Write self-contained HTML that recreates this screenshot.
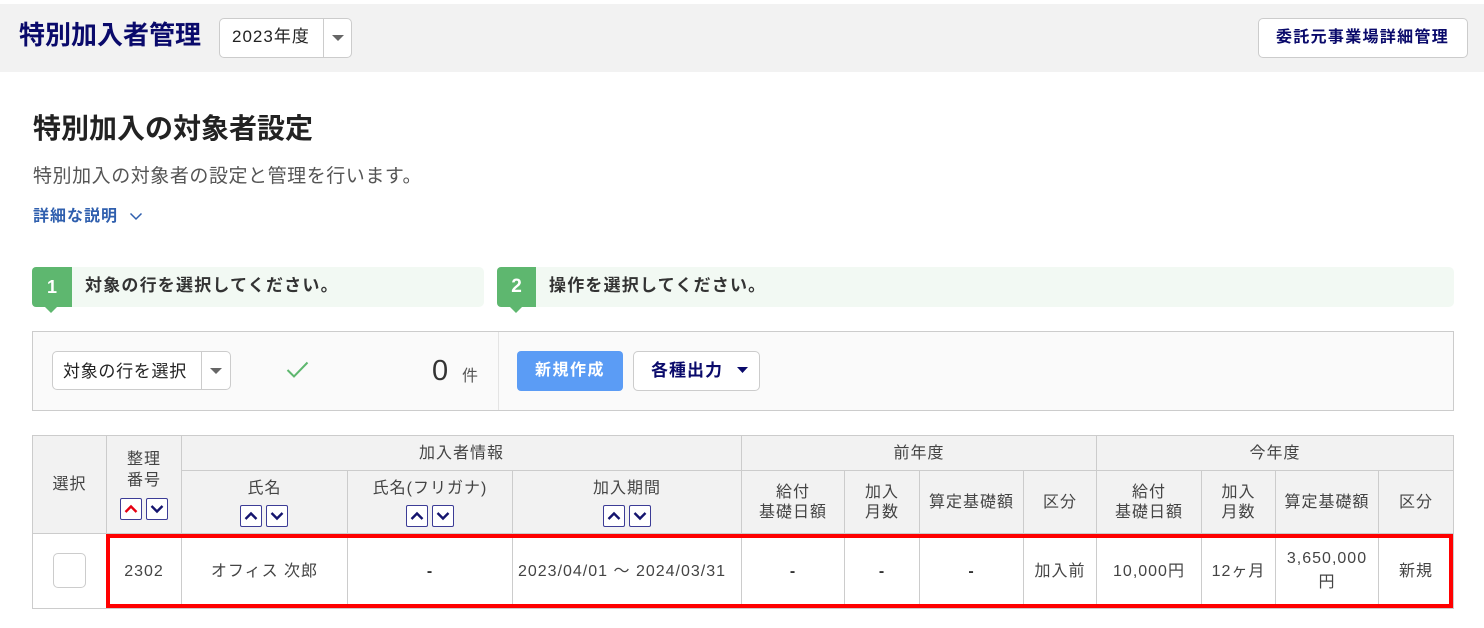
<!DOCTYPE html>
<html lang="ja"><head><meta charset="utf-8"><style>
html,body{margin:0;padding:0;background:#fff}
body{width:1484px;height:628px;position:relative;overflow:hidden;font-family:"Liberation Sans","Noto Sans CJK JP",sans-serif;color:#333}
div,span,svg{position:absolute;box-sizing:border-box}
.t{white-space:nowrap;line-height:1}
.c{text-align:center;font-size:16px;letter-spacing:1px;color:#444;white-space:nowrap;line-height:1}
.d{font-weight:700;color:#333}
.l{background:#ccc}
.box{background:#fff;border:1px solid #ccc;border-radius:5px}
.sb{width:22px;height:22px;background:#fff;border:1px solid #3c3c96;border-radius:2px}
.sb svg{left:3px;top:4px}
</style></head><body>
<div style="left:0;top:4px;width:1484px;height:68px;background:#f2f2f2"></div>
<div class="t" style="left:19px;top:22px;font-size:26px;font-weight:700;color:#0a0a6b">特別加入者管理</div>
<div class="box" style="left:219px;top:18px;width:133px;height:40px"></div>
<div class="l" style="left:323px;top:18px;width:1px;height:40px"></div>
<div class="t" style="left:232px;top:28px;font-size:17px;letter-spacing:1px;color:#222">2023年度</div>
<svg style="left:332px;top:35px" width="12" height="7"><path d="M0 0H12L6 6Z" fill="#666"/></svg>
<div class="box" style="left:1258px;top:18px;width:210px;height:40px"></div>
<div class="t" style="left:1276px;top:30px;font-size:16px;font-weight:700;letter-spacing:1.3px;color:#0a0a6b">委託元事業場詳細管理</div>

<div class="t" style="left:33px;top:115px;font-size:28px;font-weight:700;color:#222">特別加入の対象者設定</div>
<div class="t" style="left:33px;top:167px;font-size:19px;letter-spacing:.55px;color:#555">特別加入の対象者の設定と管理を行います。</div>
<div class="t" style="left:33px;top:209px;font-size:16px;font-weight:700;letter-spacing:1px;color:#2f5fae">詳細な説明</div>
<svg style="left:129px;top:212px" width="14" height="9"><path d="M1.5 1.5L7 7L12.5 1.5" fill="none" stroke="#2f5fae" stroke-width="1.5"/></svg>

<div style="left:32px;top:267px;width:452px;height:40px;background:#f2f9f3;border-radius:5px"></div>
<div style="left:32px;top:267px;width:40px;height:40px;background:#5eb76f;border-radius:4px 0 0 4px"></div>
<svg style="left:45px;top:307px" width="12" height="6"><path d="M0 0H12L6 6Z" fill="#5eb76f"/></svg>
<div class="t" style="left:32px;top:278px;width:40px;text-align:center;font-size:18px;font-weight:700;color:#fff">1</div>
<div class="t" style="left:85px;top:277px;font-size:17px;font-weight:700;letter-spacing:1.2px;color:#333">対象の行を選択してください。</div>
<div style="left:497px;top:267px;width:957px;height:40px;background:#f2f9f3;border-radius:5px"></div>
<div style="left:497px;top:267px;width:39px;height:40px;background:#5eb76f;border-radius:4px 0 0 4px"></div>
<svg style="left:510px;top:307px" width="12" height="6"><path d="M0 0H12L6 6Z" fill="#5eb76f"/></svg>
<div class="t" style="left:497px;top:277px;width:39px;text-align:center;font-size:19px;font-weight:700;color:#fff">2</div>
<div class="t" style="left:549px;top:277px;font-size:17px;font-weight:700;letter-spacing:1.2px;color:#333">操作を選択してください。</div>

<div style="left:32px;top:331px;width:1422px;height:80px;background:#fafafa;border:1px solid #ccc"></div>
<div style="left:498px;top:332px;width:1px;height:78px;background:#e4e4e4"></div>
<div class="box" style="left:52px;top:351px;width:179px;height:39px"></div>
<div class="l" style="left:201px;top:351px;width:1px;height:39px"></div>
<div class="t" style="left:63px;top:363px;font-size:17px;letter-spacing:.7px;color:#222">対象の行を選択</div>
<svg style="left:210px;top:368px" width="12" height="7"><path d="M0 0H12L6 6Z" fill="#666"/></svg>
<svg style="left:286px;top:361px" width="23" height="17"><path d="M1.5 9L8 15.5L21.5 1.5" fill="none" stroke="#5eb76f" stroke-width="2"/></svg>
<div class="t" style="left:432px;top:357px;font-size:29px;color:#333">0</div>
<div class="t" style="left:462px;top:369px;font-size:16px;color:#555">件</div>
<div style="left:517px;top:351px;width:106px;height:40px;background:#5b9cf5;border-radius:4px"></div>
<div class="t" style="left:517px;top:363px;width:106px;text-align:center;font-size:16px;font-weight:700;letter-spacing:1.5px;color:#fff">新規作成</div>
<div class="box" style="left:633px;top:351px;width:127px;height:40px"></div>
<div class="t" style="left:651px;top:362px;font-size:17px;font-weight:700;letter-spacing:1px;color:#0a0a6b">各種出力</div>
<svg style="left:737px;top:367px" width="11" height="6"><path d="M0 0H11L5.5 6Z" fill="#0a0a6b"/></svg>

<div style="left:32px;top:435px;width:1422px;height:99px;background:#f2f2f2"></div>
<div style="left:32px;top:435px;width:1422px;height:174px;border:1px solid #ccc"></div>
<div class="l" style="left:33px;top:533px;width:1420px;height:1px"></div>
<div class="l" style="left:182px;top:470px;width:1271px;height:1px"></div>
<div class="l" style="left:106px;top:436px;width:1px;height:172px"></div>
<div class="l" style="left:181px;top:436px;width:1px;height:172px"></div>
<div class="l" style="left:347px;top:470px;width:1px;height:138px"></div>
<div class="l" style="left:512px;top:470px;width:1px;height:138px"></div>
<div class="l" style="left:741px;top:436px;width:1px;height:172px"></div>
<div class="l" style="left:844px;top:470px;width:1px;height:138px"></div>
<div class="l" style="left:919px;top:470px;width:1px;height:138px"></div>
<div class="l" style="left:1023px;top:470px;width:1px;height:138px"></div>
<div class="l" style="left:1096px;top:436px;width:1px;height:172px"></div>
<div class="l" style="left:1201px;top:470px;width:1px;height:138px"></div>
<div class="l" style="left:1275px;top:470px;width:1px;height:138px"></div>
<div class="l" style="left:1378px;top:470px;width:1px;height:138px"></div>

<div class="c" style="left:33px;top:477px;width:73px">選択</div>
<div class="c" style="left:107px;top:452px;width:74px">整理</div>
<div class="c" style="left:107px;top:473px;width:74px">番号</div>
<div class="c" style="left:182px;top:446px;width:559px">加入者情報</div>
<div class="c" style="left:742px;top:446px;width:354px">前年度</div>
<div class="c" style="left:1097px;top:446px;width:356px">今年度</div>
<div class="c" style="left:182px;top:481px;width:165px">氏名</div>
<div class="c" style="left:348px;top:481px;width:164px">氏名(フリガナ)</div>
<div class="c" style="left:513px;top:481px;width:228px">加入期間</div>
<div class="c" style="left:742px;top:485px;width:102px">給付</div>
<div class="c" style="left:742px;top:505px;width:102px">基礎日額</div>
<div class="c" style="left:845px;top:485px;width:74px">加入</div>
<div class="c" style="left:845px;top:505px;width:74px">月数</div>
<div class="c" style="left:920px;top:495px;width:103px">算定基礎額</div>
<div class="c" style="left:1024px;top:495px;width:72px">区分</div>
<div class="c" style="left:1097px;top:485px;width:104px">給付</div>
<div class="c" style="left:1097px;top:505px;width:104px">基礎日額</div>
<div class="c" style="left:1202px;top:485px;width:73px">加入</div>
<div class="c" style="left:1202px;top:505px;width:73px">月数</div>
<div class="c" style="left:1276px;top:495px;width:102px">算定基礎額</div>
<div class="c" style="left:1379px;top:495px;width:74px">区分</div>

<div class="sb" style="left:120px;top:498px"><svg width="14" height="12"><path d="M1.5 9L7 3.5L12.5 9" fill="none" stroke="#e60012" stroke-width="2.4"/></svg></div>
<div class="sb" style="left:146px;top:498px"><svg width="14" height="12"><path d="M1.5 3L7 8.5L12.5 3" fill="none" stroke="#14146e" stroke-width="2.4"/></svg></div>
<div class="sb" style="left:240px;top:505px"><svg width="14" height="12"><path d="M1.5 9L7 3.5L12.5 9" fill="none" stroke="#14146e" stroke-width="2.4"/></svg></div>
<div class="sb" style="left:266px;top:505px"><svg width="14" height="12"><path d="M1.5 3L7 8.5L12.5 3" fill="none" stroke="#14146e" stroke-width="2.4"/></svg></div>
<div class="sb" style="left:406px;top:505px"><svg width="14" height="12"><path d="M1.5 9L7 3.5L12.5 9" fill="none" stroke="#14146e" stroke-width="2.4"/></svg></div>
<div class="sb" style="left:432px;top:505px"><svg width="14" height="12"><path d="M1.5 3L7 8.5L12.5 3" fill="none" stroke="#14146e" stroke-width="2.4"/></svg></div>
<div class="sb" style="left:603px;top:505px"><svg width="14" height="12"><path d="M1.5 9L7 3.5L12.5 9" fill="none" stroke="#14146e" stroke-width="2.4"/></svg></div>
<div class="sb" style="left:629px;top:505px"><svg width="14" height="12"><path d="M1.5 3L7 8.5L12.5 3" fill="none" stroke="#14146e" stroke-width="2.4"/></svg></div>

<div class="box" style="left:53px;top:553px;width:33px;height:35px;border-radius:5px"></div>
<div class="c" style="left:107px;top:564px;width:74px">2302</div>
<div class="c" style="left:182px;top:564px;width:165px">オフィス 次郎</div>
<div class="c d" style="left:348px;top:564px;width:164px">-</div>
<div class="c" style="left:508px;top:564px;width:228px">2023/04/01 ～ 2024/03/31</div>
<div class="c d" style="left:742px;top:564px;width:102px">-</div>
<div class="c d" style="left:845px;top:564px;width:74px">-</div>
<div class="c d" style="left:920px;top:564px;width:103px">-</div>
<div class="c" style="left:1024px;top:564px;width:72px">加入前</div>
<div class="c" style="left:1097px;top:564px;width:104px">10,000円</div>
<div class="c" style="left:1202px;top:564px;width:73px">12ヶ月</div>
<div class="c" style="left:1276px;top:551px;width:102px">3,650,000</div>
<div class="c" style="left:1276px;top:575px;width:102px">円</div>
<div class="c" style="left:1379px;top:564px;width:74px">新規</div>
<div style="left:106px;top:534px;width:1347px;height:74px;border:4px solid #f00"></div>
</body></html>
